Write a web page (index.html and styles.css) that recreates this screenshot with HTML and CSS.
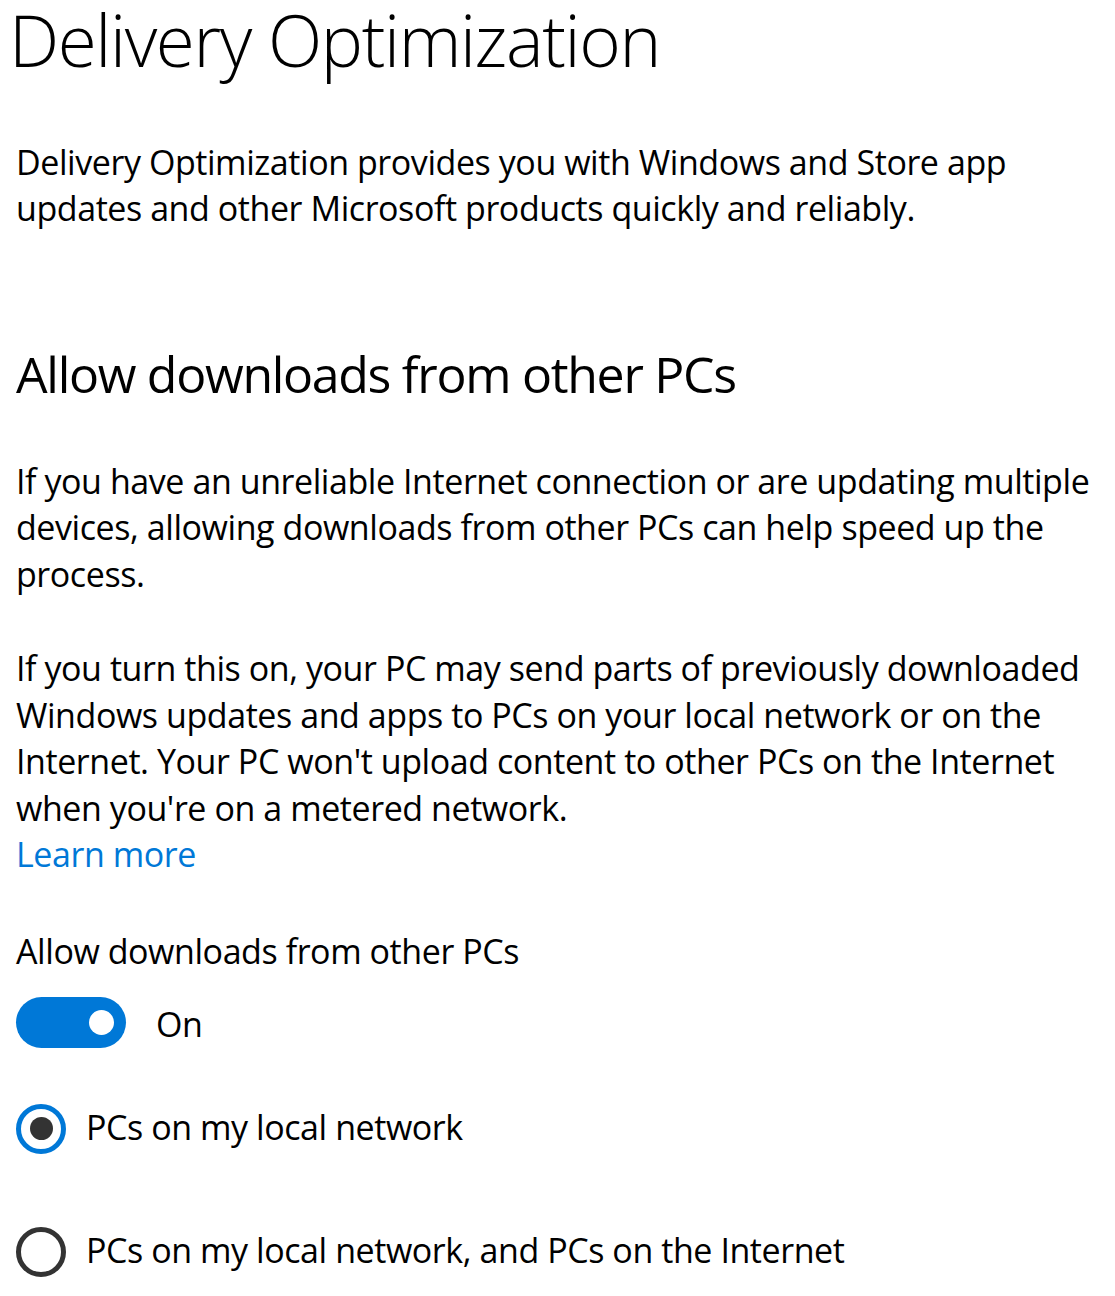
FILE: index.html
```html
<!DOCTYPE html>
<html lang="en">
<head>
<meta charset="utf-8">
<title>Delivery Optimization</title>
<link rel="stylesheet" href="styles.css">
</head>
<body>
<div class="page">
  <h1 class="title">Delivery Optimization</h1>
  <p class="text intro">Delivery Optimization provides you with Windows and Store app<br>updates and other Microsoft products quickly and reliably.</p>
  <h2 class="subtitle">Allow downloads from other PCs</h2>
  <p class="text para-a">If you have an unreliable Internet connection or are updating multiple<br>devices, allowing downloads from other PCs can help speed up the<br>process.</p>
  <p class="text para-b">If you turn this on, your PC may send parts of previously downloaded<br>Windows updates and apps to PCs on your local network or on the<br>Internet. Your PC won't upload content to other PCs on the Internet<br>when you're on a metered network.<br><a class="link" href="#">Learn more</a></p>
  <div class="text label">Allow downloads from other PCs</div>
  <div class="toggle-row">
    <span class="toggle"><span class="knob"></span></span>
    <span class="text toggle-text">On</span>
  </div>
  <div class="radio-row first">
    <span class="radio checked"></span>
    <span class="text radio-label">PCs on my local network</span>
  </div>
  <div class="radio-row second">
    <span class="radio"></span>
    <span class="text radio-label">PCs on my local network, and PCs on the Internet</span>
  </div>
</div>
</body>
</html>
```
FILE: styles.css
```css
html, body {
  margin: 0;
  padding: 0;
  background: #ffffff;
}

.page {
  padding-left: 16px;
  font-family: "Open Sans", "Noto Sans", sans-serif;
  color: #000000;
}

.title {
  margin: 0 0 0 -7px;
  font-size: 71px;
  line-height: 80px;
  font-weight: 300;
  letter-spacing: -1.4px;
  white-space: nowrap;
}

.text {
  font-size: 34px;
  line-height: 46.5px;
  font-weight: 400;
  letter-spacing: -0.43px;
  white-space: nowrap;
}

p.text {
  margin: 0;
}

.intro {
  margin-top: 58.5px !important;
}

.subtitle {
  margin: 110px 0 0 0;
  font-size: 50px;
  line-height: 64px;
  font-weight: 400;
  letter-spacing: -1.3px;
  white-space: nowrap;
}

.para-a {
  margin-top: 52px !important;
}

.para-b {
  margin-top: 48px !important;
}

.link {
  color: #0078d7;
  text-decoration: none;
}

.label {
  margin-top: 50.5px;
}

.toggle-row {
  display: flex;
  align-items: center;
  gap: 30px;
  margin-top: 22px;
}

.toggle {
  width: 110px;
  height: 51px;
  border-radius: 26px;
  background: #0078d7;
  display: flex;
  align-items: center;
  justify-content: flex-end;
  padding-right: 12px;
  box-sizing: border-box;
}

.knob {
  width: 25px;
  height: 25px;
  border-radius: 50%;
  background: #ffffff;
}

.toggle-text {
  padding-top: 4px;
}

.radio-row {
  display: flex;
  align-items: center;
  gap: 20px;
}

.radio-row.first {
  margin-top: 56px;
}

.radio-row.second {
  margin-top: 73px;
}

.radio {
  width: 50px;
  height: 50px;
  box-sizing: border-box;
  border: 5px solid #333333;
  border-radius: 50%;
  display: flex;
  align-items: center;
  justify-content: center;
  flex: none;
}

.radio.checked {
  border-color: #0078d7;
}

.radio.checked::after {
  content: "";
  width: 23px;
  height: 23px;
  border-radius: 50%;
  background: #333333;
}

.radio-label {
  margin-top: -3px;
}
```
